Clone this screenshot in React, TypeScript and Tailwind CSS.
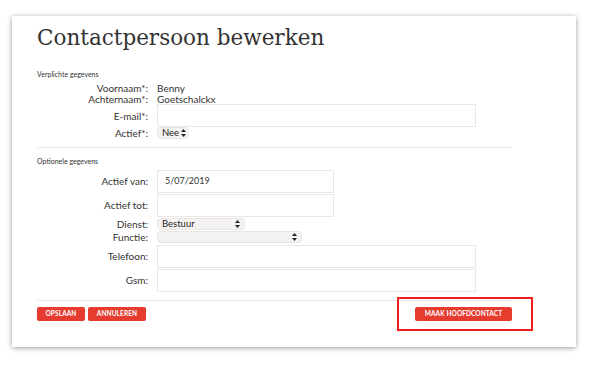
import React from "react";

// --- small up/down arrow used by the mac-style selects ---
const SelectArrows = () => (
  <svg width="5" height="8" viewBox="0 0 5 8" className="shrink-0">
    <path d="M2.5 0 L5 3 L0 3 Z" fill="#222" />
    <path d="M2.5 8 L5 5 L0 5 Z" fill="#222" />
  </svg>
);

type SelectProps = { value?: string; width: string };

const FakeSelect: React.FC<SelectProps> = ({ value = "", width }) => (
  <div
    className={`${width} h-[12px] flex items-center justify-between pl-[4px] pr-[4px] gap-[2px] rounded-[4px] bg-[#f5f3f2] border border-[#e8e4e2] text-[9.5px] leading-none text-[#222]`}
  >
    <span>{value}</span>
    <SelectArrows />
  </div>
);

const TextInput: React.FC<{ width: string; value?: string }> = ({ width, value }) => (
  <div
    className={`${width} h-[23px] flex items-center px-[7px] border border-[#ece6e4] bg-white text-[9px] text-[#333]`}
  >
    {value}
  </div>
);

// --- a label + field row ---
const Row: React.FC<{ label: string; h: string; children: React.ReactNode }> = ({ label, h, children }) => (
  <div className={`flex items-center ${h}`}>
    <div className="w-[111px] text-right text-[10px] leading-none text-[#333]">{label}</div>
    <div className="ml-[9px] flex items-center">{children}</div>
  </div>
);

const Button: React.FC<{ children: React.ReactNode; className?: string }> = ({ children, className = "" }) => (
  <div
    className={`h-[14px] flex items-center justify-center rounded-[2px] bg-[#e63b2f] text-white text-[6.5px] font-bold tracking-[0.1px] ${className}`}
  >
    {children}
  </div>
);

export default function App() {
  return (
    <div
      className="w-[600px] h-[375px] bg-white pt-[16px] pl-[12px]"
      style={{ fontFamily: "Lato, 'Open Sans', sans-serif" }}
    >
      <div className="relative w-[564px] h-[331px] bg-white shadow-[0_1px_5px_rgba(0,0,0,0.4)] pl-[25px] pt-[6px]">
        {/* Title */}
        <h1
          className="h-[32px] text-[21.5px] leading-[32px] text-[#333]"
          style={{ fontFamily: "'DejaVu Serif', serif" }}
        >
          Contactpersoon bewerken
        </h1>

        {/* Verplichte gegevens */}
        <div className="mt-[17px] text-[7px] leading-none text-[#333]">Verplichte gegevens</div>
        <div className="mt-[4px]">
          <Row label="Voornaam*:" h="h-[11px]">
            <span className="text-[10px] leading-none text-[#333]">Benny</span>
          </Row>
          <Row label="Achternaam*:" h="h-[11px]">
            <span className="text-[10px] leading-none text-[#333]">Goetschalckx</span>
          </Row>
          <Row label="E-mail*:" h="h-[23px]">
            <TextInput width="w-[319px]" />
          </Row>
          <Row label="Actief*:" h="h-[12px]">
            <FakeSelect value="Nee" width="w-[32px]" />
          </Row>
        </div>

        <div className="mt-[8px] w-[475px] h-px bg-[#f0eae8]" />

        {/* Optionele gegevens */}
        <div className="mt-[10px] text-[7px] leading-none text-[#333]">Optionele gegevens</div>
        <div className="mt-[4px]">
          <Row label="Actief van:" h="h-[24px]">
            <TextInput width="w-[177px]" value="5/07/2019" />
          </Row>
          <Row label="Actief tot:" h="h-[24px]">
            <TextInput width="w-[177px]" />
          </Row>
          <Row label="Dienst:" h="h-[13px]">
            <FakeSelect value="Bestuur" width="w-[88px]" />
          </Row>
          <Row label="Functie:" h="h-[13px]">
            <FakeSelect width="w-[145px]" />
          </Row>
          <div className="mt-[1px]">
            <Row label="Telefoon:" h="h-[24px]">
              <TextInput width="w-[319px]" />
            </Row>
            <Row label="Gsm:" h="h-[24px]">
              <TextInput width="w-[319px]" />
            </Row>
          </div>
        </div>

        <div className="mt-[8px] w-[475px] h-px bg-[#f0eae8]" />

        {/* Buttons */}
        <div className="mt-[6px] flex items-center w-[475px]">
          <Button className="w-[48px]">OPSLAAN</Button>
          <Button className="ml-[3px] w-[58px]">ANNULEREN</Button>
          <div className="ml-auto relative">
            <Button className="w-[97px]">MAAK HOOFDCONTACT</Button>
            {/* highlight box */}
            <div className="absolute left-[-18px] top-[-10px] w-[136px] h-[34px] border-2 border-[#ee1c1c]" />
          </div>
        </div>
      </div>
    </div>
  );
}
